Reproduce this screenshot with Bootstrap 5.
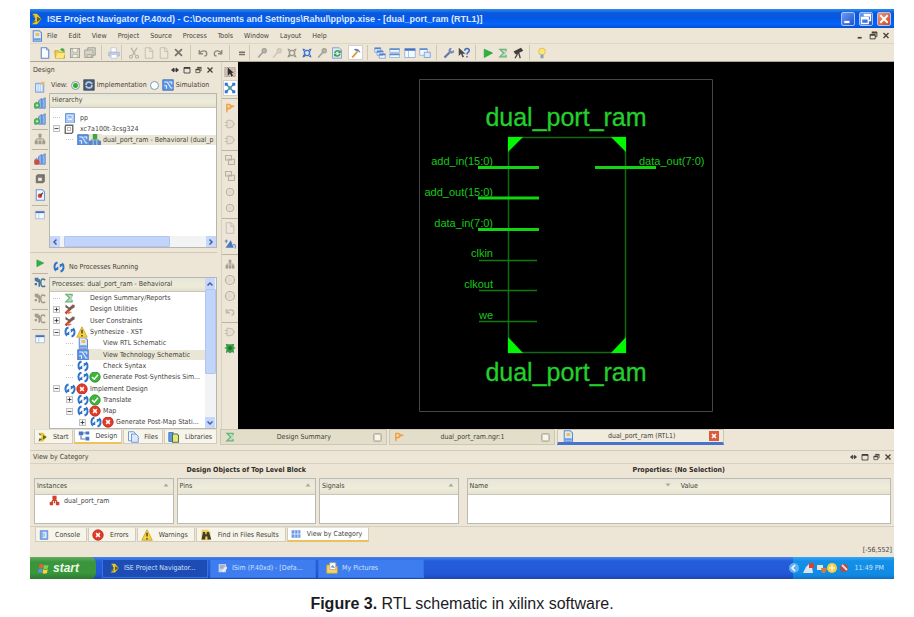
<!DOCTYPE html>
<html lang="en">
<head>
<meta charset="utf-8">
<meta name="viewport" content="width=device-width, initial-scale=1">
<title>RTL schematic in xilinx software</title>
<link href="https://cdn.jsdelivr.net/npm/bootstrap@5.3.0/dist/css/bootstrap.min.css" rel="stylesheet">
<style>
:root{--face:#ede5d5;--line:#c9c5b5;--ink:#45413b}
body{background:#fff;padding:9px 20px 0 30px;font-family:"DejaVu Sans Condensed","DejaVu Sans",sans-serif}
.ide{font-size:7px;line-height:10px;color:var(--ink);background:var(--face)}
.ide button{border:0;background:none;padding:0;color:inherit;font:inherit;line-height:inherit;white-space:nowrap}
.ide svg{display:block;flex:none}
.ic{width:12px;height:12px}
.titlebar{height:19px;padding:0 3px 0 1px;background:linear-gradient(#2e8cf2 0,#0a58dc 4px,#0557e4 9px,#0464fb 15px,#0350d4);color:#fff}
.titlebar h1{font-size:9px;line-height:18px;font-weight:700;font-family:"Liberation Sans",sans-serif;color:#dfe9fb}
.ide .winbtn{width:14px;height:14px;border:1px solid #a9c4f5;border-radius:2px;background:linear-gradient(135deg,#6c9bf5,#1f52d0)}
.ide .winbtn.shut{background:linear-gradient(135deg,#ee9a78,#cf4322)}
.menubar{height:15px;padding:0 4px 0 1px}
.menubar .entries{gap:11px;margin-left:4px}
.toolrow{height:19px;border-top:1px solid #dcd6c4;border-bottom:1px solid #a9a698;padding-left:7px}
.toolset{height:15px;padding-right:4px;border-right:1px solid #cbc6b5;margin-right:4px}
.toolset:last-child{border:0}
.ide .tool{width:15px;height:15px;display:flex;align-items:center;justify-content:center}
.ide .tool.down{background:#fff;border:1px solid #d3d0c8}
.dim{opacity:.45}
.side{width:187px;flex:none}
.strip{width:19px;flex:none;padding-top:2px;align-items:center}
.strip .tool{height:16px;flex:none}
.strip hr{width:16px;margin:2px 0 1px;border-top:1px solid #b9b5a6;opacity:1;flex:none}
.panehead{height:15px;padding:0 3px}
.upper{flex:191 1 0;min-height:0}
.lower{flex:176 1 0;min-height:0;border-top:1px solid #cfcaba}
.viewrow{height:16px;padding-left:2px;gap:2px}
.viewrow input{appearance:none;width:9px;height:9px;border:1px solid #7b9bb5;border-radius:50%;background:#fff;margin:0 1px}
.viewrow input:checked{background:radial-gradient(#2fb12f 0 2px,#e9f3e4 3px)}
.pane{background:#fff;border:1px solid #b5b7ae;min-height:0;overflow:hidden}
.colhead{height:14px;line-height:13px;padding-left:2px;background:linear-gradient(#e7e5d8,#eeecd9 60%,#e2dfd0);border-bottom:1px solid #c9c6b9}
.treerow{height:11px;padding-left:3px;white-space:nowrap;overflow:hidden}
.spread .treerow{flex:1 1 0;height:auto}
.lv2{padding-left:16px}.lv3{padding-left:29px}
.twist{width:7px;height:7px;margin-right:4px;flex:none}
i.twist{height:1px;border-bottom:1px dotted #c4c4c0}
.one{width:15px;flex:none}.two{width:25px;flex:none}
.lbl{flex:1;min-width:0;padding-left:1px;overflow:hidden}
.picked{background:#eae6d6}
.hbar{height:11px;background:#f2f3f5}
.thumb{background:#c3d4fb;border:1px solid #b1c5f3;border-radius:1px}
.vbar{width:11px;background:#f2f3f5}
.ide .arrow{width:10px;height:11px;background:#c6d6fc;display:flex;align-items:center;justify-content:center;flex:none}
.canvas{background:#000;min-width:300px}
.canvas text{fill:#18c818;font-family:"Liberation Sans",sans-serif;font-size:11px}
.canvas .big{font-size:25px;fill:#24cf2d;stroke:#24cf2d;stroke-width:.3}
.wirestrip{width:17px;border-left:1px solid #d6d1c1}
.tabrow{height:17px;padding-left:4px}
.sidetabs{width:186px;gap:1px;flex:none}
.ide .ptab{height:15px;display:flex;align-items:center;gap:5px;padding:0 4px 0 3px;background:#f7f4ea;border:1px solid #d0cbbb;border-top-color:#e5e1d4}
.ide .ptab.on{background:#fff;border-bottom:2px solid #edc25e}
.doctabs{width:504px;gap:2px}
.ide .doctab{flex:1 1 0;height:16px;display:flex;align-items:center;padding:0 4px;background:#e2dec9;border:1px solid #cbc7b5}
.ide .doctab.on{background:#efebdd;border-bottom:3px solid #4674cc}
.xbox{width:9px;height:9px;border:1px solid #b8b4a4;border-radius:2px;background:#f7f5ec;box-shadow:inset 0 0 0 1px #cfccbe}
.dockhead{height:14px;margin-top:4px;padding:0 2px 0 3px;border-top:1px solid #cfcaba;border-bottom:1px solid #d6d1c1}
.dock{padding:0 3px 2px 4px;gap:8px}
.dock h2{font-size:7px;line-height:12px;font-weight:700;margin:0 0 2px;text-align:center;color:#302c27}
.grid{gap:3px}
.gridbox{flex:1 1 0;height:46px;background:#fff;border:1px solid #b9bbb3}
.gridbox table{width:100%;table-layout:fixed;border-collapse:collapse}
.gridbox th{height:15px;padding:0 2px;font-weight:400;background:linear-gradient(#e6e5da,#efedd8 60%,#e4e2d2);border-bottom:1px solid #c9c6b9}
.gridbox td{height:13px;padding:0 0 0 14px}
.docktabs{height:17px;padding-left:5px;gap:1px;border-top:1px solid #d3cfbf}
.ide .docktabs .ptab{gap:6px;padding-right:6px}
.status{height:14px;padding-right:2px;line-height:15px;text-align:right;font-size:7px}
.taskbar{height:22px;background:linear-gradient(#4686ee,#245edb 4px,#2258d6 17px,#1c47b0);color:#d4e2fb}
.ide .start{width:66px;border-radius:0 6px 6px 0;background:linear-gradient(#5fae62,#3a943d 5px,#3a973b 16px,#2c7a30);color:#e9f7e6;font:italic 700 12px/20px "Liberation Sans",sans-serif;padding-left:8px;display:flex;align-items:center;gap:3px;margin-right:6px}
.ide .task{width:106px;height:19px;display:flex;align-items:center;gap:4px;padding-left:7px;background:#3e7df0;border:1px solid #3572e4;margin-right:2px}
.ide .task.on{background:#1d4db4}
.tray{background:linear-gradient(#38a6f2,#1290e8 4px,#1189e2 18px,#0f6fc4);padding:0 10px 0 0}
.tray svg{overflow:visible}
figcaption{font:16px/24px "Liberation Sans",sans-serif;color:#1b1b1f;padding:13px 0 1px}
</style>
<script src="https://cdn.jsdelivr.net/npm/bootstrap@5.3.0/dist/js/bootstrap.bundle.min.js"></script>
</head>
<body class="min-vh-100 d-flex flex-column">
<svg width="0" height="0" class="position-absolute" aria-hidden="true">
<symbol id="logo" viewBox="0 0 16 16"><path d="M2 1h6l6 7-6 7H1l5-7z" fill="#e9c623"/><path d="M1 1l4 3-2 2zM2 10l5 1-6 4z" fill="#49706a"/><path d="M8 5l6 3-6 4z" fill="#5f6420"/></symbol>
<symbol id="page" viewBox="0 0 16 16"><path d="M3 1h7l3 3v11H3z" fill="#f8fbff" stroke="#5f86c9" stroke-width="1.4"/><path d="M10 1v3h3" fill="#cfdef7" stroke="#5f86c9"/></symbol>
<symbol id="open" viewBox="0 0 16 16"><path d="M1 5h5l1 2h7v8H2z" fill="#f0cd45" stroke="#bd9a22"/><path d="M5 8h10l-3 7H2z" fill="#ffe680"/><path d="M8 4c1-3 5-3 6 0v3l-4-2z" fill="#48ac3e"/></symbol>
<symbol id="save" viewBox="0 0 16 16"><path d="M2 2h12v12H2z" fill="#d6d4c8" stroke="#a3a194" stroke-width="1.4"/><path d="M5 2h6v5H5zM5 10h6v4H5z" fill="#f4f3ea" stroke="#aeac9f"/></symbol>
<symbol id="saveall" viewBox="0 0 16 16"><path d="M5 1h10v10h-3v3H1V4h4z" fill="#d6d4c8" stroke="#a3a194" stroke-width="1.3"/><path d="M4 14v-4h6v4M4 4h8v8" fill="none" stroke="#a3a194"/></symbol>
<symbol id="print" viewBox="0 0 16 16"><path d="M4 1h7v6H4z" fill="#fff" stroke="#b4bfdb"/><path d="M1 7h14v5H1z" fill="#c6cee6" stroke="#a3aece"/><path d="M4 10h8v5H4z" fill="#fff" stroke="#b4bfdb"/></symbol>
<symbol id="cut" viewBox="0 0 16 16"><path d="M4 1l6 10M12 1L6 11" stroke="#77756c" stroke-width="1.7"/><circle cx="4" cy="13" r="2" fill="none" stroke="#77756c" stroke-width="1.5"/><circle cx="12" cy="13" r="2" fill="none" stroke="#77756c" stroke-width="1.5"/></symbol>
<symbol id="copy" viewBox="0 0 16 16"><path d="M3 1h7l3 4v10H3zM9 1v5h4" fill="#efede4" stroke="#8c8a80" stroke-width="1.2"/></symbol>
<symbol id="cross" viewBox="0 0 16 16"><path d="M3 3l10 10M13 3L3 13" stroke="currentColor" stroke-width="2.6"/></symbol>
<symbol id="undo" viewBox="0 0 16 16"><path d="M3 4v5h5M3 9c3-5 10-5 10 0 0 2-1 3-3 3" fill="none" stroke="#8b897f" stroke-width="1.8"/></symbol>
<symbol id="redo" viewBox="0 0 16 16"><path d="M13 4v5H8M13 9c-3-5-10-5-10 0 0 2 1 3 3 3" fill="none" stroke="#8b897f" stroke-width="1.8"/></symbol>
<symbol id="equals" viewBox="0 0 16 16"><path d="M4 7h8M4 10h8" stroke="#77756c" stroke-width="1.8"/></symbol>
<symbol id="lens" viewBox="0 0 16 16"><circle cx="11" cy="5" r="2.800" fill="#b9b7ad" stroke="#a09e95" stroke-width="1.5"/><path d="M9 7l-6 7" stroke="#a5a298" stroke-width="2.2"/></symbol>
<symbol id="fit" viewBox="0 0 16 16"><path d="M2 2l4 1-3 3zM14 2l-4 1 3 3zM2 14l1-4 3 3zM14 14l-1-4-3 3z" fill="currentColor"/><circle cx="8" cy="8" r="3.5" fill="none" stroke="currentColor" stroke-width="1.8"/><path d="M3 13l3-3" stroke="currentColor" stroke-width="2"/></symbol>
<symbol id="refresh" viewBox="0 0 16 16"><path d="M2 1h9l3 3v11H2z" fill="#dbe6f7" stroke="#6d8fcc"/><path d="M5 8c1-4 6-4 7-1M12 9c-1 4-6 4-7 1" fill="none" stroke="#3ba344" stroke-width="2"/><path d="M13 4v4H9zM4 13V9h4z" fill="#3ba344"/></symbol>
<symbol id="hammer" viewBox="0 0 16 16"><path d="M10 6l-7 8" stroke="#d5962d" stroke-width="2.4"/><path d="M5 3c4-2 8 0 9 5l-3-2-4-1z" fill="#6d86ba"/></symbol>
<symbol id="cascade" viewBox="0 0 16 16"><g fill="#eef4ff" stroke="#6f98d4"><path d="M1 1h8v6H1zM4 5h8v6H4zM7 9h8v6H7z"/></g><path d="M1 2h8M4 6h8M7 10h8" stroke="#5482cc" stroke-width="2"/></symbol>
<symbol id="tile" viewBox="0 0 16 16"><path d="M1 2h13v5H1zM1 9h13v5H1z" fill="#f3f7ff" stroke="#83a8dc"/><path d="M1 3h13M1 10h13" stroke="#5e8bd1" stroke-width="2"/></symbol>
<symbol id="win" viewBox="0 0 16 16"><path d="M1 2h14v12H1z" fill="#f6f9ff" stroke="#87a6d6"/><path d="M1 3.5h14" stroke="#4471c1" stroke-width="3"/><path d="M6 5v9" stroke="#9bb6df"/></symbol>
<symbol id="wins" viewBox="0 0 16 16"><path d="M1 2h10v9H1z" fill="#f6f9ff" stroke="#87a6d6"/><path d="M1 3h10" stroke="#5e8bd1" stroke-width="2"/><path d="M7 7h8v7H7z" fill="#dbe9fb" stroke="#6b93d2"/></symbol>
<symbol id="wrench" viewBox="0 0 16 16"><path d="M2 14l7-7" stroke="#6279b1" stroke-width="3"/><path d="M9 1L7 5l4 4 4-2-1-3-2 2-2-2 2-2z" fill="#7688ba"/></symbol>
<symbol id="help" viewBox="0 0 16 16"><path d="M1 1v11l3-3 2 5 2-1-2-4h4z" fill="#4a4a46"/><path d="M9 5c0-4 6-4 6 0 0 2-3 2-3 5M12 12v2" fill="none" stroke="#416ec0" stroke-width="2"/></symbol>
<symbol id="play" viewBox="0 0 16 16"><path d="M3 3l11 5-11 6z" fill="#28b53b" stroke="#2f9a43"/></symbol>
<symbol id="sigma" viewBox="0 0 16 16"><path d="M13 5V2H3l6 6-6 6h10v-3" fill="#b9dcc0" stroke="#6cb47c" stroke-width="2"/></symbol>
<symbol id="scope" viewBox="0 0 16 16"><path d="M2 6l10-5 3 4-10 5z" fill="#3f3e3b"/><path d="M8 8L4 15M9 8l2 7" stroke="#4c4b47" stroke-width="1.8"/></symbol>
<symbol id="bulb" viewBox="0 0 16 16"><circle cx="8" cy="6" r="4.5" fill="#fbe774" stroke="#d8b735"/><path d="M6 10h4v5H6z" fill="#8ba1c4"/></symbol>
<symbol id="bars" viewBox="0 0 16 16"><path d="M1 9l3-2v8H1zM6 5l4-3v13H6zM11 3l4-2v14h-4z" fill="#8eb4ed" stroke="#4f7fc9"/></symbol>
<symbol id="barsg" viewBox="0 0 16 16"><use href="#bars"/><circle cx="4" cy="11" r="4" fill="#43ad3f"/><path d="M4 9v4M2 11h4" stroke="#fff"/></symbol>
<symbol id="barsr" viewBox="0 0 16 16"><use href="#bars"/><circle cx="4" cy="12" r="3.5" fill="#d94836"/></symbol>
<symbol id="sheet" viewBox="0 0 16 16"><path d="M2 3h11v12H2z" fill="#b9d2f7" stroke="#6a95d8"/><path d="M4 5v8M7 5v8M10 5v8" stroke="#fff"/><path d="M10 1h4v4h-4z" fill="#edba5a"/></symbol>
<symbol id="tree3" viewBox="0 0 16 16"><path d="M8 5v4M3 11V8h10v3" fill="none" stroke="currentColor" stroke-width="1.3"/><path d="M6 1h4v5H6zM1 10h4v5H1zM6 10h4v5H6zM11 10h4v5h-4z" fill="currentColor"/></symbol>
<symbol id="trio" viewBox="0 0 16 16"><path d="M8 4L3 12M8 4l5 8M8 4v8" stroke="currentColor" stroke-width="2"/><path d="M5 1h6v5H5zM1 10h5v5H1zM10 10h5v5h-5z" fill="currentColor"/></symbol>
<symbol id="mod" viewBox="0 0 16 16"><path d="M8 5v4M3 11V8h10v3" fill="none" stroke="#5c7fae" stroke-width="1.3"/><path d="M5 0h6v7H5z" fill="#3fa444"/><path d="M0 9h5v6H0zM6 9h4v6H6zM11 9h5v6h-5z" fill="#4f86cf"/></symbol>
<symbol id="chip" viewBox="0 0 16 16"><path d="M2 3l2-2h11v11l-2 2H2z" fill="#7b7873" stroke="#55524e"/><path d="M5 6h6v5H5z" fill="#eee9df"/></symbol>
<symbol id="impl" viewBox="0 0 16 16"><path d="M1 1h14v14H1z" fill="#4c5a70" stroke="#3b4656"/><path d="M4 8c0-5 7-5 8-1M12 8c0 5-7 5-8 1" fill="none" stroke="#a9cbf5" stroke-width="2.2"/></symbol>
<symbol id="chipw" viewBox="0 0 16 16"><path d="M3 2h11v11l-2 2H2V4z" fill="#fff" stroke="#6a6862" stroke-width="2.2"/><path d="M5.500 5.500h5v5h-5z" fill="#fff" stroke="#88867f"/></symbol>
<symbol id="report" viewBox="0 0 16 16"><path d="M3 1h8l3 3v11H3z" fill="#f1f6ff" stroke="#6a95d8" stroke-width="1.4"/><circle cx="8" cy="9" r="3" fill="#d3473a"/><path d="M8 9l4-4" stroke="#444" stroke-width="1.5"/></symbol>
<symbol id="rtl" viewBox="0 0 16 16"><path d="M3 1h8l3 3v11H3z" fill="#dce9fd" stroke="#5b8ad5" stroke-width="1.4"/><path d="M6 4h5v4H6z" fill="#f0c04c"/><path d="M4 11h9v3H4z" fill="#6b9ae0"/></symbol>
<symbol id="pp" viewBox="0 0 16 16"><path d="M2 2h12v13H2z" fill="#a9c9f7" stroke="#4b81d3"/><path d="M5 5h6v3H5zM5 10h6" stroke="#fff" fill="#6d9de2"/></symbol>
<symbol id="sch" viewBox="0 0 16 16"><path d="M1 1h14v14H1z" fill="#5f95e5" stroke="#3465b5"/><path d="M3 4h4l5 8h2M9 4h4v3M3 9h3v4" fill="none" stroke="#e6f0ff" stroke-width="1.4"/></symbol>
<symbol id="net" viewBox="0 0 16 16"><path d="M3 3l10 10M13 3L3 13" stroke="#4c89d7" stroke-width="2"/><path d="M1 1h4v4H1zM11 1h4v4h-4zM1 11h4v4H1zM11 11h4v4h-4z" fill="#3776cd"/><path d="M6 6h4v4H6z" fill="#4b9f8d"/></symbol>
<symbol id="cursor" viewBox="0 0 16 16"><path d="M1 2h14v12H1z" fill="#c9c2b8" stroke="#b0897c" stroke-dasharray="2 1"/><path d="M5 2v11l3-3 2 4 2-1-2-4h3z" fill="#352e2a"/></symbol>
<symbol id="gate" viewBox="0 0 16 16"><path d="M2 2h6l6 4-6 4H4v5H2z" fill="#f6b871"/><path d="M3 2h4l3 3-3 4H3zM3 9v5M9 5h6" fill="#fad494" stroke="#ea9a45" stroke-width="1.8"/></symbol>
<symbol id="gateg" viewBox="0 0 16 16"><path d="M4 3h4a5 5 0 010 10H4zM1 6h3M1 10h3M13 8h2" fill="#dedace" stroke="#8d8a7f" stroke-width="1.3"/></symbol>
<symbol id="boxes" viewBox="0 0 16 16"><path d="M2 2h8v6H2zM6 7h8v7H6z" fill="#e5e1d5" stroke="#77746b" stroke-width="1.4"/></symbol>
<symbol id="ring" viewBox="0 0 16 16"><circle cx="8" cy="8" r="6" fill="#e1ded1" stroke="#75736a" stroke-width="1.6"/><circle cx="8" cy="8" r="2.500" fill="#cfccc0"/></symbol>
<symbol id="penta" viewBox="0 0 16 16"><path d="M2 13L9 3l4 10z" fill="#4d7ac0"/><path d="M1 4h4M3 2v5M12 9h3v5" stroke="#3566b4" fill="none"/></symbol>
<symbol id="bug" viewBox="0 0 16 16"><path d="M3 3l2 2M13 3l-2 2M1 8h3M15 8h-3M3 14l2-2M13 14l-2-2" stroke="#317d36" stroke-width="1.6"/><path d="M3 3h10v9l-5 3-5-3z" fill="#37a047"/><circle cx="8" cy="8" r="2.500" fill="#246b2d"/></symbol>
<symbol id="proc" viewBox="0 0 16 16"><path d="M2 2c1 5 4 5 5 1v10M15 4c-5-3-6 0-6 4s2 6 6 4" fill="none" stroke="currentColor" stroke-width="2"/><path d="M1 1h5v4H1zM1 8h3v3H1z" fill="currentColor"/></symbol>
<symbol id="cycle" viewBox="0 0 16 16"><path d="M6 2C1 3 1 10 4 13M10 14c5-1 5-8 2-11" fill="none" stroke="#2f74c9" stroke-width="2.6"/><path d="M1 12h6V7zM15 4H9v5z" fill="#2f74c9"/></symbol>
<symbol id="tools" viewBox="0 0 16 16"><path d="M2 14L13 3" stroke="#c5472d" stroke-width="3.4"/><path d="M2 2l5 4 7-4v4L8 9 2 6z" fill="#6b625b"/><path d="M4 11l7 1-5 3z" fill="#e27a50"/></symbol>
<symbol id="warn" viewBox="0 0 16 16"><path d="M8 1l7 14H1z" fill="#f8d33c" stroke="#c69a1c"/><path d="M8 5v5M8 12v2" stroke="#333" stroke-width="1.7"/></symbol>
<symbol id="ok" viewBox="0 0 16 16"><circle cx="8" cy="8" r="7" fill="#3cb53a" stroke="#2a8f2b"/><path d="M4 8l3 3 5-6" fill="none" stroke="#fff" stroke-width="2"/></symbol>
<symbol id="err" viewBox="0 0 16 16"><circle cx="8" cy="8" r="7" fill="#e13b28" stroke="#b52a1c"/><path d="M5.500 5.500l5 5M10.500 5.500l-5 5" stroke="#fff" stroke-width="2"/></symbol>
<symbol id="plus" viewBox="0 0 9 9"><path d="M.5.5h8v8h-8z" fill="#f6f5f0" stroke="#a5a8ac"/><path d="M2 4.500h5M4.500 2v5" stroke="#222"/></symbol>
<symbol id="minus" viewBox="0 0 9 9"><path d="M.5.5h8v8h-8z" fill="#f6f5f0" stroke="#a5a8ac"/><path d="M2 4.500h5" stroke="#222"/></symbol>
<symbol id="libs" viewBox="0 0 16 16"><path d="M1 2h6v12H1z" fill="#5f99e6" stroke="#3b6db8"/><path d="M6 4h6l2 2v9H6z" fill="#f7e27a" stroke="#3a7b52" stroke-width="1.4"/></symbol>
<symbol id="files" viewBox="0 0 16 16"><path d="M2 1h7l3 3v9H2z" fill="#f3f8ff" stroke="#6c97da" stroke-width="1.3"/><path d="M6 4h6l3 3v8H6z" fill="#dce9fd" stroke="#6c97da" stroke-width="1.3"/></symbol>
<symbol id="dsn" viewBox="0 0 16 16"><path d="M1 2h6v5H1zM10 2h5v4h-5zM10 9h5v5h-5z" fill="#4377c8"/><path d="M7 4h3M4 7v5h6" fill="none" stroke="#6c7f9f" stroke-width="1.5"/></symbol>
<symbol id="arrows" viewBox="0 0 16 16"><path d="M1 8l5-4v8zM15 8l-5-4v8zM5 8h6" fill="#333" stroke="#333" stroke-width="1.5"/></symbol>
<symbol id="maxi" viewBox="0 0 16 16"><path d="M2 3h12v11H2z" fill="none" stroke="#333" stroke-width="1.6"/><path d="M2 4h12" stroke="#333" stroke-width="3"/></symbol>
<symbol id="resto" viewBox="0 0 16 16"><path d="M5 2h9v8h-3M2 6h9v8H2z" fill="none" stroke="currentColor" stroke-width="1.7"/><path d="M5 3h9M2 7h9" stroke="currentColor" stroke-width="3"/></symbol>
<symbol id="mini" viewBox="0 0 16 16"><path d="M3 12h7" stroke="currentColor" stroke-width="3"/></symbol>
<symbol id="up" viewBox="0 0 16 16"><path d="M3 11l5-5 5 5" fill="none" stroke="#44639c" stroke-width="3"/></symbol>
<symbol id="left" viewBox="0 0 16 16"><path d="M11 3L6 8l5 5" fill="none" stroke="#44639c" stroke-width="3"/></symbol>
<symbol id="sortup" viewBox="0 0 16 16"><path d="M3 11l5-6 5 6z" fill="#aaa896"/></symbol>
<symbol id="cons" viewBox="0 0 16 16"><path d="M2 1h12v14H2z" fill="#7fa9ea" stroke="#4b7ccb"/><path d="M6 3h6v10H6z" fill="#dce9ff"/><path d="M8 5v6" stroke="#4b7ccb"/></symbol>
<symbol id="find" viewBox="0 0 16 16"><path d="M2 1h9l3 3v11H2z" fill="#f4cf55"/><path d="M4 4h3v3h2V4h3l3 10h-5v-4H7v4H2z" fill="#403b33"/></symbol>
<symbol id="cat" viewBox="0 0 16 16"><path d="M1 2h14v12H1z" fill="#6a98df"/><path d="M1 8h14M6 2v12M11 2v12" stroke="#e3eeff" stroke-width="1.4"/></symbol>
<symbol id="flag" viewBox="0 0 16 16"><path d="M2 3q3-2 5 0L6 8Q4 6 1 8z" fill="#ee5b34"/><path d="M8 3q3 2 6 0l-1 5q-3 2-6 0z" fill="#7fd14c"/><path d="M1 9q3-2 5 0l-1 5q-2-2-5 0z" fill="#5a92ee"/><path d="M7 9q3 2 6 0l-1 5q-3 2-6 0z" fill="#f8d33c"/></symbol>
<symbol id="pics" viewBox="0 0 16 16"><path d="M1 4h5l2 2h7v9H1z" fill="#f3d36a" stroke="#c7a03a"/><path d="M5 1h8v9H5z" fill="#fff" stroke="#b4a679"/><path d="M6 7l3-3 3 4z" fill="#6790c9"/></symbol>
<symbol id="isim" viewBox="0 0 16 16"><path d="M1 1h12v13H1z" fill="#c9d4e8"/><path d="M3 4h8M3 7h6" stroke="#596a8a"/><path d="M7 13l7-7" stroke="#eef" stroke-width="3"/></symbol>
</svg>

<figure class="m-0 d-flex flex-column flex-fill">
<main class="ide d-flex flex-column flex-fill">
  <header class="titlebar d-flex align-items-center">
    <svg class="ic me-1"><use href="#logo"/></svg>
    <h1 class="m-0 flex-fill text-nowrap overflow-hidden">ISE Project Navigator (P.40xd) - C:\Documents and Settings\Rahul\pp\pp.xise - [dual_port_ram (RTL1)]</h1>
    <div class="d-flex gap-1">
      <button class="winbtn" aria-label="Minimize"><svg class="ic"><use href="#mini"/></svg></button>
      <button class="winbtn" aria-label="Restore"><svg class="ic"><use href="#resto"/></svg></button>
      <button class="winbtn shut" aria-label="Close"><svg class="ic"><use href="#cross"/></svg></button>
    </div>
  </header>
  <nav class="menubar d-flex align-items-center">
    <svg class="ic"><use href="#rtl"/></svg>
    <div class="entries d-flex flex-fill">
      <button>File</button><button>Edit</button><button>View</button><button>Project</button><button>Source</button><button>Process</button><button>Tools</button><button>Window</button><button>Layout</button><button>Help</button>
    </div>
    <div class="d-flex gap-1">
      <button aria-label="Minimize document"><svg width="9" height="9"><use href="#mini"/></svg></button>
      <button aria-label="Restore document"><svg width="9" height="9"><use href="#resto"/></svg></button>
      <button aria-label="Close document"><svg width="8" height="9"><use href="#cross"/></svg></button>
    </div>
  </nav>
  <div class="toolrow d-flex align-items-center" role="toolbar" aria-label="Main tools">
    <div class="toolset d-flex">
      <button class="tool" aria-label="New"><svg class="ic"><use href="#page"/></svg></button>
      <button class="tool" aria-label="Open"><svg class="ic"><use href="#open"/></svg></button>
      <button class="tool" aria-label="Save"><svg class="ic"><use href="#save"/></svg></button>
      <button class="tool" aria-label="Save all"><svg class="ic"><use href="#saveall"/></svg></button>
    </div>
    <div class="toolset d-flex pe-0"><button class="tool" aria-label="Print"><svg class="ic"><use href="#print"/></svg></button></div>
    <div class="toolset d-flex">
      <button class="tool" aria-label="Cut"><svg class="ic dim"><use href="#cut"/></svg></button>
      <button class="tool" aria-label="Copy"><svg class="ic dim"><use href="#copy"/></svg></button>
      <button class="tool" aria-label="Paste"><svg class="ic dim"><use href="#copy"/></svg></button>
      <button class="tool" aria-label="Delete"><svg width="11" height="11" color="#77756c"><use href="#cross"/></svg></button>
    </div>
    <div class="toolset d-flex">
      <button class="tool" aria-label="Undo"><svg class="ic"><use href="#undo"/></svg></button>
      <button class="tool" aria-label="Redo"><svg class="ic"><use href="#redo"/></svg></button>
    </div>
    <div class="toolset d-flex pe-0"><button class="tool" aria-label="More"><svg class="ic"><use href="#equals"/></svg></button></div>
    <div class="toolset d-flex border-0 pe-0">
      <button class="tool" aria-label="Zoom in"><svg class="ic"><use href="#lens"/></svg></button>
      <button class="tool" aria-label="Zoom out"><svg class="ic dim"><use href="#lens"/></svg></button>
      <button class="tool" aria-label="Zoom to fit"><svg class="ic" color="#9a988e"><use href="#fit"/></svg></button>
      <button class="tool" aria-label="Full view"><svg class="ic" color="#3f74cf"><use href="#fit"/></svg></button>
      <button class="tool" aria-label="Zoom to area"><svg class="ic"><use href="#lens"/></svg></button>
      <button class="tool" aria-label="Refresh"><svg class="ic"><use href="#refresh"/></svg></button>
    </div>
    <div class="toolset d-flex"><button class="tool down" aria-label="Build mode"><svg class="ic"><use href="#hammer"/></svg></button></div>
    <div class="toolset d-flex">
      <button class="tool" aria-label="Cascade"><svg class="ic"><use href="#cascade"/></svg></button>
      <button class="tool" aria-label="Tile"><svg class="ic"><use href="#tile"/></svg></button>
      <button class="tool" aria-label="Window"><svg class="ic"><use href="#win"/></svg></button>
      <button class="tool" aria-label="Float"><svg class="ic"><use href="#wins"/></svg></button>
    </div>
    <div class="toolset d-flex">
      <button class="tool" aria-label="Settings"><svg class="ic"><use href="#wrench"/></svg></button>
      <button class="tool" aria-label="What is this"><svg class="ic"><use href="#help"/></svg></button>
    </div>
    <div class="toolset d-flex">
      <button class="tool" aria-label="Run"><svg class="ic"><use href="#play"/></svg></button>
      <button class="tool" aria-label="Summary"><svg width="10" height="10"><use href="#sigma"/></svg></button>
      <button class="tool" aria-label="Analyze"><svg class="ic"><use href="#scope"/></svg></button>
    </div>
    <div class="toolset d-flex"><button class="tool" aria-label="Tips"><svg class="ic"><use href="#bulb"/></svg></button></div>
  </div>

  <div class="d-flex flex-fill">
    <aside class="side d-flex flex-column">
      <section class="upper d-flex flex-column">
        <div class="panehead d-flex align-items-center">
          <span class="flex-fill">Design</span>
          <span class="d-flex gap-1"><svg width="8" height="8"><use href="#arrows"/></svg><svg width="8" height="8"><use href="#maxi"/></svg><svg width="7" height="8"><use href="#resto"/></svg><svg width="8" height="8"><use href="#cross"/></svg></span>
        </div>
        <div class="d-flex flex-fill">
          <div class="strip d-flex flex-column">
            <button class="tool" aria-label="New source"><svg class="ic"><use href="#sheet"/></svg></button>
            <button class="tool" aria-label="Add source"><svg class="ic"><use href="#barsg"/></svg></button>
            <button class="tool" aria-label="Add copy"><svg class="ic"><use href="#barsg"/></svg></button>
            <hr>
            <button class="tool" aria-label="Hierarchy"><svg class="ic dim"><use href="#tree3"/></svg></button>
            <hr>
            <button class="tool" aria-label="Remove"><svg class="ic"><use href="#barsr"/></svg></button>
            <hr>
            <button class="tool" aria-label="Device"><svg width="10" height="10"><use href="#chip"/></svg></button>
            <button class="tool" aria-label="Report"><svg class="ic"><use href="#report"/></svg></button>
            <hr>
            <button class="tool" aria-label="Layout"><svg width="10" height="10"><use href="#win"/></svg></button>
          </div>
          <div class="d-flex flex-column flex-fill overflow-hidden">
            <div class="viewrow d-flex align-items-center text-nowrap">
              <span>View:</span>
              <input type="radio" name="view" id="vi" checked><svg class="ic"><use href="#impl"/></svg><label for="vi">Implementation</label>
              <input type="radio" name="view" id="vs"><svg class="ic"><use href="#sch"/></svg><label for="vs">Simulation</label>
            </div>
            <div class="pane d-flex flex-column flex-fill mb-1">
              <div class="colhead">Hierarchy</div>
              <div class="flex-fill pt-1">
                <div class="treerow d-flex align-items-center"><i class="twist"></i><span class="one"><svg class="ic"><use href="#pp"/></svg></span><span class="lbl">pp</span></div>
                <div class="treerow d-flex align-items-center"><svg class="twist"><use href="#minus"/></svg><span class="one"><svg width="10" height="10"><use href="#chipw"/></svg></span><span class="lbl">xc7a100t-3csg324</span></div>
                <div class="treerow lv2 d-flex align-items-center"><i class="twist"></i><span class="two d-flex picked"><svg class="ic"><use href="#sch"/></svg><svg class="ic"><use href="#mod"/></svg></span><span class="lbl picked">dual_port_ram - Behavioral (dual_p</span></div>
              </div>
              <div class="hbar d-flex">
                <button class="arrow" aria-label="Scroll left"><svg width="8" height="8"><use href="#left"/></svg></button><div class="d-flex flex-fill"><div class="w-75 ps-1"><div class="thumb h-100"></div></div></div><button class="arrow" aria-label="Scroll right"><svg width="8" height="8" transform="rotate(180)"><use href="#left"/></svg></button>
              </div>
            </div>
          </div>
        </div>
      </section>
      <section class="lower d-flex">
        <div class="strip d-flex flex-column">
          <button class="tool" aria-label="Run process"><svg width="10" height="10"><use href="#play"/></svg></button>
          <hr>
          <button class="tool" aria-label="Process properties"><svg class="ic" color="#42759f"><use href="#proc"/></svg></button>
          <button class="tool" aria-label="Rerun"><svg class="ic dim"><use href="#proc"/></svg></button>
          <hr>
          <button class="tool" aria-label="Rerun all"><svg class="ic dim"><use href="#proc"/></svg></button>
          <hr>
          <button class="tool" aria-label="Layout"><svg width="10" height="10"><use href="#win"/></svg></button>
        </div>
        <div class="d-flex flex-column flex-fill overflow-hidden">
          <div class="d-flex align-items-center ps-1 pt-2 pb-1"><svg class="ic me-1"><use href="#cycle"/></svg><span>No Processes Running</span></div>
          <div class="pane d-flex flex-fill">
            <div class="d-flex flex-column flex-fill overflow-hidden">
              <div class="colhead">Processes: dual_port_ram - Behavioral</div>
              <div class="spread d-flex flex-column flex-fill">
                <div class="treerow d-flex align-items-center"><i class="twist"></i><span class="two"><svg width="10" height="10"><use href="#sigma"/></svg></span><span class="lbl">Design Summary/Reports</span></div>
                <div class="treerow d-flex align-items-center"><svg class="twist"><use href="#plus"/></svg><span class="two"><svg class="ic"><use href="#tools"/></svg></span><span class="lbl">Design Utilities</span></div>
                <div class="treerow d-flex align-items-center"><svg class="twist"><use href="#plus"/></svg><span class="two"><svg class="ic"><use href="#tools"/></svg></span><span class="lbl">User Constraints</span></div>
                <div class="treerow d-flex align-items-center"><svg class="twist"><use href="#minus"/></svg><span class="two d-flex"><svg class="ic"><use href="#cycle"/></svg><svg class="ic"><use href="#warn"/></svg></span><span class="lbl">Synthesize - XST</span></div>
                <div class="treerow lv2 d-flex align-items-center"><i class="twist"></i><span class="two"><svg class="ic"><use href="#rtl"/></svg></span><span class="lbl">View RTL Schematic</span></div>
                <div class="treerow lv2 d-flex align-items-center"><i class="twist"></i><span class="two picked"><svg class="ic"><use href="#sch"/></svg></span><span class="lbl picked">View Technology Schematic</span></div>
                <div class="treerow lv2 d-flex align-items-center"><i class="twist"></i><span class="two"><svg class="ic"><use href="#cycle"/></svg></span><span class="lbl">Check Syntax</span></div>
                <div class="treerow lv2 d-flex align-items-center"><i class="twist"></i><span class="two d-flex"><svg class="ic"><use href="#cycle"/></svg><svg class="ic"><use href="#ok"/></svg></span><span class="lbl">Generate Post-Synthesis Sim...</span></div>
                <div class="treerow d-flex align-items-center"><svg class="twist"><use href="#minus"/></svg><span class="two d-flex"><svg class="ic"><use href="#cycle"/></svg><svg class="ic"><use href="#err"/></svg></span><span class="lbl">Implement Design</span></div>
                <div class="treerow lv2 d-flex align-items-center"><svg class="twist"><use href="#plus"/></svg><span class="two d-flex"><svg class="ic"><use href="#cycle"/></svg><svg class="ic"><use href="#ok"/></svg></span><span class="lbl">Translate</span></div>
                <div class="treerow lv2 d-flex align-items-center"><svg class="twist"><use href="#minus"/></svg><span class="two d-flex"><svg class="ic"><use href="#cycle"/></svg><svg class="ic"><use href="#err"/></svg></span><span class="lbl">Map</span></div>
                <div class="treerow lv3 d-flex align-items-center"><svg class="twist"><use href="#plus"/></svg><span class="two d-flex"><svg class="ic"><use href="#cycle"/></svg><svg class="ic"><use href="#err"/></svg></span><span class="lbl">Generate Post-Map Stati...</span></div>
              </div>
            </div>
            <div class="vbar d-flex flex-column">
              <button class="arrow" aria-label="Scroll up"><svg width="8" height="8"><use href="#up"/></svg></button>
              <div class="flex-fill d-flex flex-column"><div class="thumb" style="flex:66 1 0"></div><div style="flex:34 1 0"></div></div>
              <button class="arrow" aria-label="Scroll down"><svg width="8" height="8" transform="rotate(180)"><use href="#up"/></svg></button>
            </div>
          </div>
        </div>
      </section>
    </aside>
    <div class="strip wirestrip d-flex flex-column ms-1">
      <button class="tool" aria-label="Select"><svg class="ic"><use href="#cursor"/></svg></button>
      <button class="tool down" aria-label="Nets"><svg class="ic"><use href="#net"/></svg></button>
      <hr>
      <button class="tool" aria-label="Gate"><svg width="10" height="10"><use href="#gate"/></svg></button>
      <button class="tool" aria-label="Expand"><svg class="ic dim"><use href="#gateg"/></svg></button>
      <button class="tool" aria-label="Collapse"><svg class="ic dim"><use href="#gateg"/></svg></button>
      <hr>
      <button class="tool" aria-label="Push"><svg class="ic dim"><use href="#boxes"/></svg></button>
      <button class="tool" aria-label="Pop"><svg class="ic dim"><use href="#boxes"/></svg></button>
      <button class="tool" aria-label="Previous"><svg width="10" height="10" class="dim"><use href="#ring"/></svg></button>
      <button class="tool" aria-label="Next"><svg width="10" height="10" class="dim"><use href="#ring"/></svg></button>
      <hr>
      <button class="tool" aria-label="Sheet"><svg class="ic dim"><use href="#copy"/></svg></button>
      <button class="tool" aria-label="Annotate"><svg class="ic"><use href="#penta"/></svg></button>
      <hr>
      <button class="tool" aria-label="Pin"><svg width="10" height="10" class="dim"><use href="#tree3"/></svg></button>
      <button class="tool" aria-label="Circle"><svg class="ic dim"><use href="#ring"/></svg></button>
      <button class="tool" aria-label="Arc"><svg class="ic dim"><use href="#ring"/></svg></button>
      <button class="tool" aria-label="Rotate"><svg class="ic dim"><use href="#undo"/></svg></button>
      <hr>
      <button class="tool" aria-label="Route"><svg class="ic dim"><use href="#gateg"/></svg></button>
      <button class="tool" aria-label="Debug"><svg class="ic"><use href="#bug"/></svg></button>
    </div>
    <div class="canvas flex-fill d-flex align-items-center justify-content-center">
      <svg width="294" height="333" viewBox="0 0 294 333" role="img" aria-label="dual_port_ram block">
        <path d="M.5.5h293v332H.5z" fill="none" stroke="#454545"/>
        <path d="M89.500 58.500h117v215h-117z" fill="none" stroke="#106a10" stroke-width="1.500"/>
        <path d="M89 58h15L89 73zM207 58h-15l15 15zM89 274h15l-15-16zM207 274h-15l15-16z" fill="#00f800"/>
        <path d="M59 88.500h61M59 119h61M59 150.500h61M176 88.500h61" stroke="#10d510" stroke-width="3"/>
        <path d="M60 181.500h58M60 211.500h58M60 242.500h58" stroke="#107a10" stroke-width="1.500"/>
        <text class="big" x="147" y="47" text-anchor="middle">dual_port_ram</text>
        <text class="big" x="147" y="302" text-anchor="middle">dual_port_ram</text>
        <g text-anchor="end"><text x="74" y="86">add_in(15:0)</text><text x="74" y="117">add_out(15:0)</text><text x="74" y="148">data_in(7:0)</text><text x="74" y="178">clkin</text><text x="74" y="209">clkout</text><text x="74" y="240">we</text></g>
        <text x="220" y="86">data_out(7:0)</text>
      </svg>
    </div>
  </div>

  <div class="tabrow d-flex">
    <div class="sidetabs d-flex">
      <button class="ptab"><svg width="10" height="10"><use href="#logo"/></svg>Start</button>
      <button class="ptab on"><svg class="ic"><use href="#dsn"/></svg>Design</button>
      <button class="ptab"><svg class="ic"><use href="#files"/></svg>Files</button>
      <button class="ptab"><svg class="ic"><use href="#libs"/></svg>Libraries</button>
    </div>
    <div class="doctabs d-flex">
      <button class="doctab"><svg width="10" height="10"><use href="#sigma"/></svg><span class="flex-fill">Design Summary</span><i class="xbox"></i></button>
      <button class="doctab"><svg width="10" height="10"><use href="#gate"/></svg><span class="flex-fill">dual_port_ram.ngr:1</span><i class="xbox"></i></button>
      <button class="doctab on"><svg class="ic"><use href="#rtl"/></svg><span class="flex-fill">dual_port_ram (RTL1)</span><svg width="10" height="10" viewBox="0 0 10 10"><path d="M0 0h10v10H0z" fill="#dd5a3c"/><path d="M3 3l4 4M7 3L3 7" stroke="#fff" stroke-width="1.600"/></svg></button>
    </div>
  </div>

  <div class="dockhead d-flex align-items-center">
    <span class="flex-fill">View by Category</span>
    <span class="d-flex gap-1"><svg width="7" height="8"><use href="#arrows"/></svg><svg width="8" height="8"><use href="#maxi"/></svg><svg width="7" height="8"><use href="#resto"/></svg><svg width="8" height="8"><use href="#cross"/></svg></span>
  </div>
  <div class="dock d-flex">
    <section class="w-50">
      <h2>Design Objects of Top Level Block</h2>
      <div class="grid d-flex">
        <div class="gridbox"><table><thead><tr><th><span class="d-flex justify-content-between">Instances<svg width="10" height="8"><use href="#sortup"/></svg></span></th></tr></thead><tbody><tr><td><span class="d-flex align-items-center gap-1"><svg width="11" height="11" color="#d0432f"><use href="#trio"/></svg>dual_port_ram</span></td></tr></tbody></table></div>
        <div class="gridbox"><table><thead><tr><th><span class="d-flex justify-content-between">Pins<svg width="10" height="8"><use href="#sortup"/></svg></span></th></tr></thead></table></div>
        <div class="gridbox"><table><thead><tr><th><span class="d-flex justify-content-between">Signals<svg width="10" height="8"><use href="#sortup"/></svg></span></th></tr></thead></table></div>
      </div>
    </section>
    <section class="w-50">
      <h2>Properties: (No Selection)</h2>
      <div class="grid d-flex">
        <div class="gridbox"><table><thead><tr><th><span class="d-flex justify-content-between pe-1">Name<svg width="10" height="8" transform="rotate(180)"><use href="#sortup"/></svg></span></th><th>Value</th></tr></thead></table></div>
      </div>
    </section>
  </div>
  <div class="docktabs d-flex">
    <button class="ptab"><svg width="10" height="12"><use href="#cons"/></svg>Console</button>
    <button class="ptab"><svg class="ic"><use href="#err"/></svg>Errors</button>
    <button class="ptab"><svg class="ic"><use href="#warn"/></svg>Warnings</button>
    <button class="ptab"><svg class="ic"><use href="#find"/></svg>Find in Files Results</button>
    <button class="ptab on"><svg width="10" height="10"><use href="#cat"/></svg>View by Category</button>
  </div>
  <div class="status">[-56,552]</div>
  <footer class="taskbar d-flex align-items-stretch">
    <button class="start"><svg width="12" height="13"><use href="#flag"/></svg>start</button>
    <div class="d-flex flex-fill align-items-center">
      <button class="task on"><svg width="10" height="10"><use href="#logo"/></svg>ISE Project Navigator...</button>
      <button class="task"><svg width="10" height="11"><use href="#isim"/></svg>ISim (P.40xd) - [Defa...</button>
      <button class="task"><svg class="ic"><use href="#pics"/></svg>My Pictures</button>
    </div>
    <div class="tray d-flex align-items-center">
      <svg width="62" height="14" viewBox="0 0 62 14" aria-hidden="true"><circle cx="1" cy="7" r="5" fill="#61b0f5"/><path d="M2 4L-1 7l3 3" fill="none" stroke="#fff" stroke-width="1.500"/><path d="M10 12l3-6 3-3 3 3 1 6z" fill="#dce3ec"/><path d="M16 2h5v5h-5z" fill="#d94130"/><path d="M24 4h6v5h-6z" fill="#e7e3d9"/><path d="M28 7h6l-2 5h-3z" fill="#d07d42"/><circle cx="39" cy="7" r="5" fill="#f6cf45"/><path d="M39 4v6M36 7h6" stroke="#fff"/><circle cx="51" cy="7" r="4" fill="#b24c46"/><path d="M49 4l5 5" stroke="#e7dddd" stroke-width="2"/></svg>
      <span>11:49 PM</span>
    </div>
  </footer>
</main>
<figcaption class="text-center"><strong>Figure 3.</strong> RTL schematic in xilinx software.</figcaption>
</figure>
</body>
</html>
